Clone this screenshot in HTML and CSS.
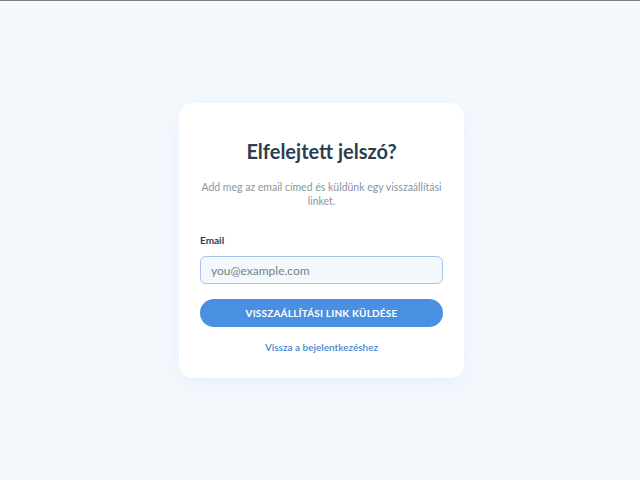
FILE: index.html
```html
<!DOCTYPE html>
<html lang="hu">
<head>
<meta charset="utf-8">
<title>Elfelejtett jelszó</title>
<link rel="stylesheet" href="styles.css">
</head>
<body>
<main class="page">
  <form class="card">
    <h1 class="title">Elfelejtett jelszó?</h1>
    <p class="subtitle">Add meg az email címed és küldünk egy visszaállítási linket.</p>
    <label class="label" for="email">Email</label>
    <input class="input" id="email" type="email" placeholder="you@example.com">
    <button class="button" type="button">Visszaállítási link küldése</button>
    <a class="link" href="#">Vissza a bejelentkezéshez</a>
  </form>
</main>
</body>
</html>
```
FILE: styles.css
```css
* { box-sizing: border-box; }
html, body { margin: 0; height: 100%; }
body {
  background: #f5f9fd;
  font-family: "Lato", "DejaVu Sans", sans-serif;
  border-top: 1px solid #7c7f85;
}
.page {
  height: 100%;
  display: flex;
  align-items: center;
  justify-content: center;
}
.card {
  width: 285px;
  background: #ffffff;
  border-radius: 14px;
  box-shadow: 0 6px 24px rgba(74, 144, 226, 0.10);
  padding: 36px 21px 24px;
  display: flex;
  flex-direction: column;
  margin-left: 3px;
}
.title {
  margin: 0;
  font-size: 20px;
  line-height: 24px;
  font-weight: 700;
  color: #2c3e50;
  text-align: center;
}
.subtitle {
  margin: 17px -3px 0;
  font-size: 10.5px;
  line-height: 14px;
  color: #8a94a0;
  text-align: center;
}
.label {
  margin-top: 25px;
  font-size: 10px;
  line-height: 14px;
  font-weight: 700;
  color: #2c3e50;
}
.input {
  margin-top: 9px;
  height: 28px;
  border: 1px solid #a4c4ea;
  border-radius: 6px;
  background: #f4f8fc;
  padding: 0 10px;
  font-family: inherit;
  font-size: 12px;
  color: #2c3e50;
}
.input::placeholder { color: #7a7f87; }
.button {
  margin-top: 15px;
  height: 28px;
  border: none;
  border-radius: 14px;
  background: #4a90e2;
  color: #ffffff;
  font-family: inherit;
  font-size: 10px;
  font-weight: 700;
  text-transform: uppercase;
  letter-spacing: 0.2px;
}
.link {
  margin-top: 13px;
  font-size: 10px;
  line-height: 14px;
  font-weight: 600;
  color: #4a86d0;
  text-align: center;
  text-decoration: none;
}
```
